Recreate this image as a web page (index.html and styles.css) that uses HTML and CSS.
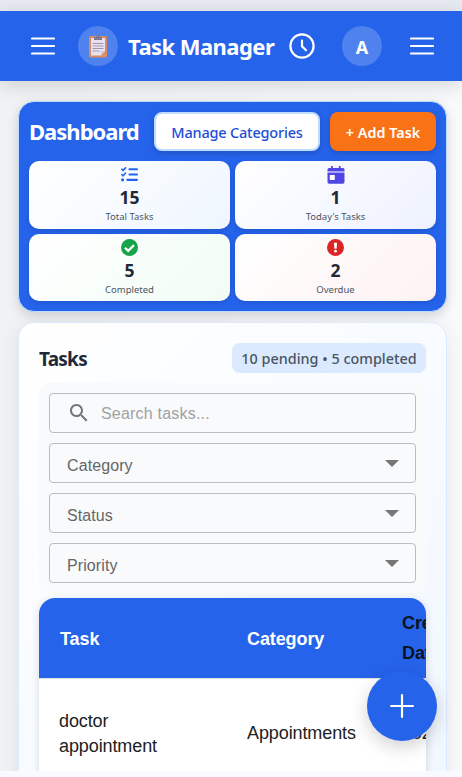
FILE: index.html
```html
<!DOCTYPE html>
<html lang="en">
<head>
<meta charset="utf-8">
<title>Task Manager</title>
<link rel="stylesheet" href="styles.css">
</head>
<body>
<div class="page">
  <header class="topbar">
    <svg class="menu" viewBox="0 0 24 24"><path d="M1 4.500h22M1 12h22M1 19.500h22"/></svg>
    <div class="logo">
      <svg width="20" height="24" viewBox="0 0 20 24"><rect x="1" y="2" width="18" height="21.500" rx="1.500" fill="#d98d5f"/><path d="M3 4h14v13l-4 4.500H3z" fill="#e8e1f2"/><path d="M17 17v4.500h-4z" fill="#e29653"/><path d="M13 21.500V17h4z" fill="#cfc5dc"/><path d="M6 3h2V1.500h4V3h2v3H6z" fill="#82798e"/><path d="M4.500 9.500h11M4.500 12h11M4.500 14.500h11M4.500 17h7" stroke="#9f98ad" stroke-width="1"/></svg>
    </div>
    <h1 class="brand">Task Manager</h1>
    <svg class="clock" viewBox="0 0 26 26"><circle cx="13" cy="13" r="11.600"/><path d="M13 7.700v5.500l4 4"/></svg>
    <div class="avatar">A</div>
    <svg class="menu" viewBox="0 0 24 24"><path d="M1 4.500h22M1 12h22M1 19.500h22"/></svg>
  </header>
  <main>
    <section class="dash">
      <div class="dash-head">
        <h2 class="dash-title">Dashboard</h2>
        <button class="btn manage">Manage Categories</button>
        <button class="btn add">+ Add Task</button>
      </div>
      <div class="stats">
        <div class="stat total">
          <svg viewBox="0 0 512 512" fill="#2563eb"><path d="M152 38c10 9 11 24 2 34l-72 80c-4 5-11 8-17 8s-13-2-18-7L7 113C-2 104-2 89 7 79s25-9 34 0l22 22 55-61c9-10 24-11 34-2zm0 160c10 9 11 24 2 34l-72 80c-4 5-11 8-17 8s-13-2-18-7L7 273c-9-9-9-24 0-34s25-9 34 0l22 22 55-61c9-10 24-11 34-2zM224 96c0-18 14-32 32-32h224c18 0 32 14 32 32s-14 32-32 32H256c-18 0-32-14-32-32zm0 160c0-18 14-32 32-32h224c18 0 32 14 32 32s-14 32-32 32H256c-18 0-32-14-32-32zm-64 160c0-18 14-32 32-32h288c18 0 32 14 32 32s-14 32-32 32H192c-18 0-32-14-32-32zM48 368a48 48 0 1 1 0 96 48 48 0 1 1 0-96z"/></svg>
          <b>15</b><span>Total Tasks</span>
        </div>
        <div class="stat today">
          <svg viewBox="0 0 17 18"><path d="M3.500 0h1.800v2H3.500zM11.300 0h1.800v2h-1.800zM1.500 2h14A1.500 1.500 0 0 1 17 3.500V5H0V3.500A1.500 1.500 0 0 1 1.500 2z" fill="#4f46e5"/><path d="M0 5h17v2H0z" fill="#a7a2f2"/><path d="M0 7h17v9a1.700 1.700 0 0 1-1.700 1.700H1.700A1.700 1.700 0 0 1 0 16z" fill="#4f46e5"/><rect x="2.300" y="9" width="5" height="5" rx=".6" fill="#fff"/></svg>
          <b>1</b><span>Today's Tasks</span>
        </div>
        <div class="stat done">
          <svg viewBox="0 0 17 17"><circle cx="8.500" cy="8.500" r="8.500" fill="#16a34a"/><path d="M4 8.700l3.200 3.200 5.800-5.800" fill="none" stroke="#fff" stroke-width="2.200"/></svg>
          <b>5</b><span>Completed</span>
        </div>
        <div class="stat overdue">
          <svg viewBox="0 0 17 17"><circle cx="8.500" cy="8.500" r="8.500" fill="#dc2626"/><path d="M6.900 3.700h3.200l-.5 6H7.400z" fill="#fff"/><circle cx="8.500" cy="12.200" r="1.400" fill="#fff"/></svg>
          <b>2</b><span>Overdue</span>
        </div>
      </div>
    </section>
    <section class="tasks">
      <div class="tasks-head">
        <h3>Tasks</h3>
        <span class="summary">10 pending • 5 completed</span>
      </div>
      <div class="filters">
        <div class="field search"><svg viewBox="0 0 24 24"><path d="M15.500 14h-.79l-.28-.27C15.410 12.590 16 11.110 16 9.500 16 5.910 13.090 3 9.500 3S3 5.910 3 9.500 5.910 16 9.500 16c1.610 0 3.090-.59 4.230-1.570l.27.28v.79l5 4.990L20.490 19zm-6 0C7.010 14 5 11.990 5 9.500S7.010 5 9.500 5 14 7.010 14 9.500 11.990 14 9.500 14"/></svg><span>Search tasks...</span></div>
        <div class="field select"><span>Category</span><i></i></div>
        <div class="field select"><span>Status</span><i></i></div>
        <div class="field select"><span>Priority</span><i></i></div>
      </div>
      <div class="table-wrap">
        <table>
          <thead><tr><th class="c1">Task</th><th class="c2">Category</th><th class="c3">Created Date</th></tr></thead>
          <tbody><tr><td>doctor appointment</td><td>Appointments</td><td class="date">2025</td></tr></tbody>
        </table>
      </div>
    </section>
  </main>
  <button class="fab" aria-label="Add task"><svg viewBox="0 0 24 24"><path d="M12 1.900v20.200M1.900 12h20.200"/></svg></button>
</div>
</body>
</html>
```
FILE: styles.css
```css
* { box-sizing: border-box; }
body { margin: 0; background: #f8faff; font-family: "Noto Sans", sans-serif; overflow: hidden; }
h1, h2, h3 { margin: 0; }
.page { position: relative; height: 771px; padding-top: 11px; overflow: hidden; background: linear-gradient(90deg, #f1f2f4, #f8fafc); box-shadow: inset 0 11px #e8ebf2; }
.topbar { position: relative; height: 70px; padding: 0 28px 0 31px; display: flex; align-items: center; background: #2563eb; color: #fff; box-shadow: 0 4px 20px rgba(0,0,0,.15); }
.menu { width: 24px; height: 24px; flex: none; fill: none; stroke: #fff; stroke-width: 2.200; stroke-linecap: round; }
.logo, .avatar { width: 40px; height: 40px; flex: none; border-radius: 50%; background: rgba(255,255,255,.2); display: flex; align-items: center; justify-content: center; }
.logo { margin-left: 23px; }
.brand { width: 147px; margin-left: 10px; font-size: 22px; line-height: 30px; font-weight: 700; letter-spacing: -.55px; white-space: nowrap; }
.clock { width: 26px; height: 26px; margin-left: 14px; flex: none; fill: none; stroke: #fff; stroke-width: 2.200; stroke-linecap: round; }
.avatar { margin-left: 27px; margin-right: 28px; padding-top: 2px; font-size: 18px; font-weight: 700; }
main { padding: 20px 15px 0 18px; }
.dash { height: 211px; padding: 10px; border: 1px solid #bfdbfe; border-radius: 16px; background: #2563eb; box-shadow: 0 4px 12px rgba(0,0,0,.15); }
.dash-head { height: 39px; display: flex; align-items: center; }
.dash-title { flex: 1; font-size: 22px; line-height: 39px; letter-spacing: -1px; color: #fff; white-space: nowrap; }
.btn { height: 39px; padding: 2px 0 0; border-radius: 8px; font-family: inherit; white-space: nowrap; box-shadow: 0 2px 6px rgba(0,0,0,.18); }
.manage { width: 166px; padding: 0; border: 2px solid #bfdbfe; background: #fff; color: #1d4ed8; font-size: 14.500px; font-weight: 500; letter-spacing: -.2px; }
.add { width: 106px; margin-left: 10px; border: 0; background: #f97316; color: #fff; font-size: 14.400px; font-weight: 600; }
.stats { margin-top: 10px; display: grid; grid-template-columns: 1fr 1fr; grid-template-rows: 68px 67px; gap: 5px; }
.stat { padding-top: 5px; border-radius: 10px; display: flex; flex-direction: column; align-items: center; box-shadow: 0 2px 5px rgba(0,0,0,.12); }
.stat svg { width: 17px; height: 17px; }
.today svg { width: 18px; height: 18px; margin-bottom: -1px; }
.stat b { font-size: 17.500px; line-height: 20px; margin-top: 4px; color: #1f2937; }
.stat span { font-size: 9.500px; line-height: 13px; margin-top: 3px; color: #4b5563; white-space: nowrap; }
.total { background: linear-gradient(135deg, #fff, #eff6ff); }
.today { background: linear-gradient(135deg, #fff, #eef2ff); }
.done { background: linear-gradient(135deg, #fff, #f0fdf4); }
.overdue { background: linear-gradient(135deg, #fff, #fef2f2); }
.tasks { height: 600px; margin-top: 10px; padding: 20px; border: 1px solid #dbeafe; border-radius: 16px; background: linear-gradient(135deg, #fff, #eff6ff); box-shadow: 0 4px 20px rgba(0,0,0,.08); }
.tasks-head { height: 30px; display: flex; justify-content: space-between; align-items: center; }
.tasks-head h3 { padding-top: 1px; font-size: 19px; line-height: 30px; letter-spacing: -.75px; color: #1f2937; }
.summary { width: 194px; height: 30px; border-radius: 8px; background: #dbeafe; color: #4b5563; font-size: 14.400px; line-height: 31px; font-weight: 500; text-align: center; white-space: nowrap; }
.filters { margin-top: 10px; height: 210px; padding: 10px; display: grid; grid-auto-rows: 40px; gap: 10px; border-radius: 12px; background: #f9fafb; }
.field { border: 1px solid #bcbdbf; border-radius: 4px; display: flex; align-items: center; font: 16px "Liberation Sans", sans-serif; color: #666; }
.search { padding-left: 17px; color: #a0a1a2; }
.search svg { width: 24px; height: 24px; margin-right: 10px; fill: #757575; }
.search span { padding-top: 2px; letter-spacing: .2px; }
.select { padding: 0 17px; justify-content: space-between; }
.select span { padding-top: 6px; letter-spacing: .1px; }
.select i { width: 0; height: 0; margin-top: 1px; border: 6.500px solid transparent; border-width: 7px 7px 0; border-top-color: #757575; margin-right: -1px; }
.table-wrap { height: 300px; margin-top: 5px; border-radius: 16px; overflow: hidden; background: #fff; box-shadow: 0 2px 8px rgba(0,0,0,.14); }
table { width: 500px; border-collapse: collapse; table-layout: fixed; font-family: "Liberation Sans", sans-serif; color: #212121; letter-spacing: -.1px; }
thead { background: #2563eb; }
th { height: 80px; padding: 2px 21px 0; text-align: left; font-size: 18px; line-height: 30px; color: #fff; }
.c1 { width: 187px; }
.c2 { width: 155px; }
.c3 { padding: 0 70px 0 21px; color: #0b1220; }
td { height: 110px; padding: 2px 67px 0 20px; border-top: 1px solid #e0e0e0; font-size: 18px; line-height: 25px; }
td + td { padding: 0 0 0 21px; }
.fab { position: absolute; left: 367px; top: 671px; width: 70px; height: 70px; padding: 0; border: 0; border-radius: 50%; background: #2563eb; display: flex; align-items: center; justify-content: center; box-shadow: 0 6px 18px rgba(0,0,0,.18); }
.fab svg { width: 26px; height: 26px; fill: none; stroke: #fff; stroke-width: 2; stroke-linecap: round; }
```
